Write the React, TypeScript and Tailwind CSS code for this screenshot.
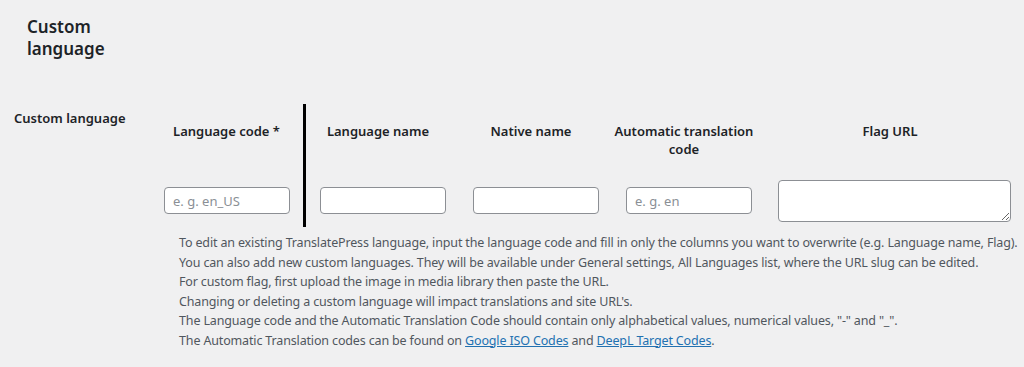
import React from 'react';

const font = { fontFamily: '"Noto Sans", "Open Sans", Arial, sans-serif' };

type Col = { label: React.ReactNode; placeholder?: string; area?: boolean };

const cols: Col[] = [
  { label: 'Language code *', placeholder: 'e. g. en_US' },
  { label: 'Language name' },
  { label: 'Native name' },
  { label: <>Automatic translation<br />code</>, placeholder: 'e. g. en' },
  { label: 'Flag URL', area: true },
];

export default function App() {
  return (
    <div className="h-[367px] w-[1024px] overflow-hidden bg-[#f0f0f1] text-[#1d2327]" style={font}>
      {/* Section title */}
      <h2 className="w-[100px] pl-[27px] pt-[16px] text-[17px] font-semibold leading-[22px] box-content">
        Custom language
      </h2>

      <div className="mt-[44px] flex">
        {/* Row label */}
        <div className="w-[150px] shrink-0 pl-[14px] pt-[5px] text-[13px] font-semibold leading-[18px]">
          Custom language
        </div>

        <div className="flex-1">
          {/* Table */}
          <div className="flex">
            {cols.map((c, i) => (
              <div
                key={i}
                className={
                  i === 0
                    ? 'w-[156px] border-r-[3px] border-black'
                    : i === 4
                      ? 'w-[259px]'
                      : 'w-[153px]'
                }
              >
                <div
                  className={`flex h-[70px] justify-center pt-[18px] text-center text-[13px] font-semibold leading-[18px] ${
                    i === 0 ? '' : 'pr-[9px]'
                  }`}
                >
                  <span>{c.label}</span>
                </div>
                <div className={`flex h-[53px] items-center ${i === 4 ? 'pl-[13px]' : 'pl-[14px]'}`}>
                  {c.area ? (
                    <textarea
                      className="h-[42px] w-[233px] rounded-[4px] border border-[#8c8f94] bg-white px-2 text-[13px]"
                    />
                  ) : (
                    <input
                      type="text"
                      placeholder={c.placeholder}
                      className="h-[27px] w-[126px] rounded-[4px] border border-[#8c8f94] bg-white px-2 text-[13px] placeholder:text-[#8a8f95]"
                    />
                  )}
                </div>
              </div>
            ))}
          </div>

          {/* Description */}
          <div className="mt-[6px] whitespace-nowrap pl-[29px] text-[12.5px] leading-[19.5px] tracking-[-0.15px] text-[#50575e]">
            <p>To edit an existing TranslatePress language, input the language code and fill in only the columns you want to overwrite (e.g. Language name, Flag).</p>
            <p>You can also add new custom languages. They will be available under General settings, All Languages list, where the URL slug can be edited.</p>
            <p>For custom flag, first upload the image in media library then paste the URL.</p>
            <p>Changing or deleting a custom language will impact translations and site URL's.</p>
            <p>The Language code and the Automatic Translation Code should contain only alphabetical values, numerical values, "-" and "_".</p>
            <p>
              The Automatic Translation codes can be found on{' '}
              <a href="#" className="text-[#2271b1] underline">Google ISO Codes</a> and{' '}
              <a href="#" className="text-[#2271b1] underline">DeepL Target Codes</a>.
            </p>
          </div>
        </div>
      </div>
    </div>
  );
}
